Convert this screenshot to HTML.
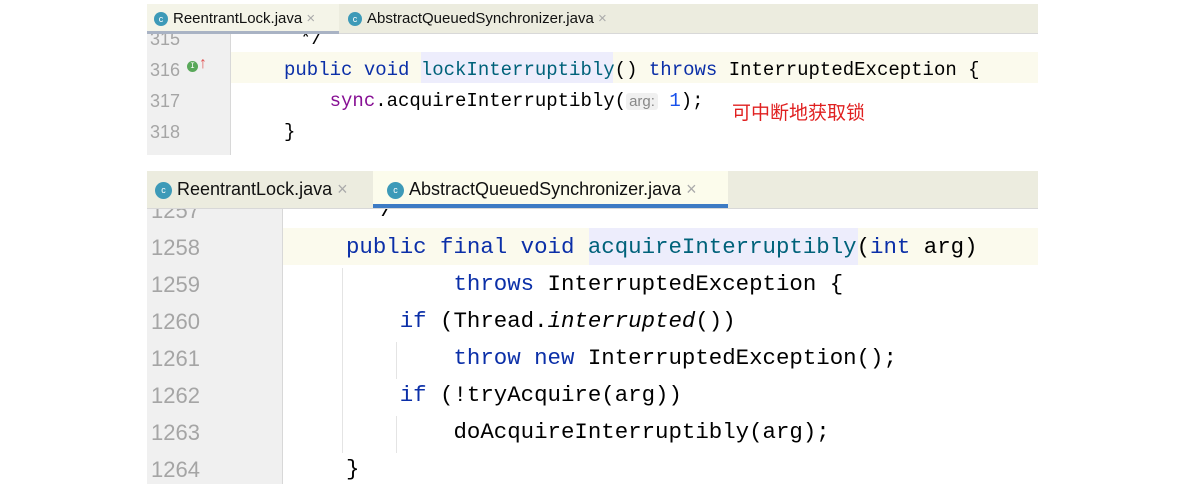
<!DOCTYPE html><html><head><style>
body{margin:0;width:1180px;height:484px;background:#fff;position:relative;overflow:hidden;font-family:"Liberation Mono",monospace}
.a{position:absolute;white-space:pre}
.clip{position:absolute;overflow:hidden}
.tabs{position:absolute;background:#ececdf;border-bottom:1px solid #d8d8d8}
.tab{position:absolute;font-family:"Liberation Sans",sans-serif;color:#111;white-space:pre}
.ic{display:inline-block;border-radius:50%;background:#3d9ab8;color:#fff;font-size:9px;text-align:center;vertical-align:middle;margin-right:5px;font-family:"Liberation Sans"}
.k{color:#0b2fa8}.m{color:#00627a}.p{color:#871094}.n{color:#1750eb}
.ln{color:#a5a5a5;font-family:"Liberation Sans",sans-serif}
</style></head><body>
<div class="tabs" style="left:147px;top:4px;width:891px;height:29px"></div>
<div class="a" style="left:147px;top:4px;width:192px;height:29px;background:#f4f4e8"></div>
<div class="a" style="left:147px;top:31px;width:192px;height:3px;background:#a9b3c4"></div>
<div class="tab" style="left:154px;top:10px;font-size:15px"><span class="ic" style="width:14px;height:14px;line-height:14px">c</span>ReentrantLock.java <span style="color:#aaa">×</span></div>
<div class="tab" style="left:348px;top:10px;font-size:15px"><span class="ic" style="width:14px;height:14px;line-height:14px">c</span>AbstractQueuedSynchronizer.java <span style="color:#aaa">×</span></div>
<div class="clip" style="left:147px;top:34px;width:891px;height:121px">
<div class="a" style="left:0;top:0;width:83px;height:121px;background:#f0f0f0"></div>
<div class="a" style="left:83px;top:0;width:1px;height:121px;background:#d8d8d8"></div>
<div class="a" style="left:84px;top:18px;width:807px;height:31px;background:#fbfaed"></div>
<div class="a" style="left:274px;top:18px;width:192px;height:31px;background:#ededfc"></div>
<div class="a ln" style="left:3px;top:-10px;font-size:18px;line-height:31px">315
316
317
318
319</div>
<div class="a" style="left:40px;top:27px;width:11px;height:11px;border-radius:50%;background:#59a85a;color:#fff;font-size:8px;text-align:center;line-height:11px">I</div>
<div class="a" style="left:52px;top:21px;color:#e05555;font-size:16px;font-family:'Liberation Sans'">↑</div>
<div class="a" style="left:153px;top:-10px;font-size:19px;line-height:31px">*/</div>
<div class="a" style="left:0;top:21px;font-size:19px;line-height:31px;padding-left:137px"><span class="k">public void </span><span class="m">lockInterruptibly</span>() <span class="k">throws</span> InterruptedException {
    <span class="p">sync</span>.acquireInterruptibly(<span style="font-family:'Liberation Sans';font-size:15px;color:#888;background:#f0f0f0;border-radius:3px;padding:0 3px">arg:</span> <span class="n">1</span>);
}</div>
</div>
<div class="a" style="left:732px;top:98px;color:#e02020;font-size:19px;font-family:'Liberation Sans','Noto Sans CJK SC',sans-serif">可中断地获取锁</div>
<div class="tabs" style="left:147px;top:171px;width:891px;height:37px"></div>
<div class="a" style="left:373px;top:171px;width:355px;height:37px;background:#fcfcec"></div>
<div class="a" style="left:373px;top:204px;width:355px;height:4px;background:#3d7bc4"></div>
<div class="tab" style="left:155px;top:179px;font-size:18px"><span class="ic" style="width:17px;height:17px;line-height:17px">c</span>ReentrantLock.java <span style="color:#aaa">×</span></div>
<div class="tab" style="left:387px;top:179px;font-size:18px"><span class="ic" style="width:17px;height:17px;line-height:17px">c</span>AbstractQueuedSynchronizer.java <span style="color:#aaa">×</span></div>
<div class="clip" style="left:147px;top:209px;width:891px;height:275px">
<div class="a" style="left:0;top:0;width:135px;height:275px;background:#f0f0f0"></div>
<div class="a" style="left:135px;top:0;width:1px;height:275px;background:#d8d8d8"></div>
<div class="a" style="left:136px;top:19px;width:755px;height:37px;background:#fbfaed"></div>
<div class="a" style="left:442px;top:19px;width:269px;height:37px;background:#ededfc"></div>
<div class="a ln" style="left:4px;top:-17px;font-size:22px;line-height:37px">1257
1258
1259
1260
1261
1262
1263
1264</div>
<div class="a" style="left:195px;top:59px;width:1px;height:185px;background:#e4e4e4"></div>
<div class="a" style="left:249px;top:133px;width:1px;height:37px;background:#e4e4e4"></div>
<div class="a" style="left:249px;top:207px;width:1px;height:37px;background:#e4e4e4"></div>
<div class="a" style="left:220px;top:-17px;font-size:22.4px;line-height:37px">*/</div>
<div class="a" style="left:0;top:20px;font-size:22.4px;line-height:37px;padding-left:199px"><span class="k">public final void </span><span class="m">acquireInterruptibly</span>(<span class="k">int</span> arg)
        <span class="k">throws</span> InterruptedException {
    <span class="k">if</span> (Thread.<i>interrupted</i>())
        <span class="k">throw new</span> InterruptedException();
    <span class="k">if</span> (!tryAcquire(arg))
        doAcquireInterruptibly(arg);
}</div>
</div>
</body></html>
